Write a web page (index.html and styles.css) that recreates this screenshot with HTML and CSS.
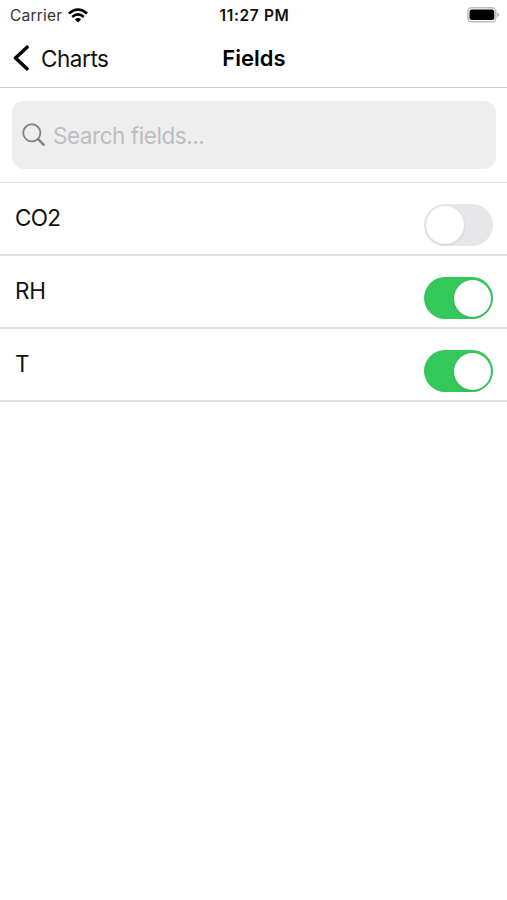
FILE: index.html
```html
<!DOCTYPE html>
<html lang="en">
<head>
<meta charset="utf-8">
<title>Fields</title>
<link rel="stylesheet" href="styles.css">
</head>
<body>
<div class="status">
  <div class="carrier"><span class="carrier-name">Carrier</span>
    <svg class="wifi" width="20" height="15" viewBox="0 0 20 15"><g fill="none" stroke="#000" stroke-width="2.6"><path d="M.9 5.4Q10-2.4 19.1 5.4"/><path d="M4.2 8.9Q10 4 15.8 8.9"/></g><path d="M6.9 11.4Q10 8.8 13.1 11.4L10 14.6Z"/></svg>
  </div>
  <span class="time">11:27 PM</span>
  <svg class="battery" width="32" height="16" viewBox="0 0 32 16"><rect x=".8" y=".8" width="28" height="14" rx="4" fill="#fff" stroke="#bdbdbd" stroke-width="1.5"/><rect x="2.5" y="2.5" width="24.8" height="10.6" rx="2.5"/><path d="M30.3 5.5Q32 6 32 7.8T30.3 10Z" fill="#aaa"/></svg>
</div>
<header class="nav">
  <a class="back"><svg width="16" height="26" viewBox="0 0 16 26"><path d="M14 2.2L2.5 13L14 23.8" fill="none" stroke="#000" stroke-width="3.5" stroke-linecap="round" stroke-linejoin="round"/></svg><span class="back-label">Charts</span></a>
  <h1 class="title">Fields</h1>
</header>
<div class="search-wrap">
  <div class="search">
    <svg width="24" height="24" viewBox="0 0 24 24"><g fill="none" stroke="#858585" stroke-width="1.9"><circle cx="9.8" cy="9.8" r="8.6"/><path d="M16 16L22.3 22.3" stroke-width="2.5"/></g></svg>
    <span class="placeholder">Search fields...</span>
  </div>
</div>
<main class="list">
  <div class="row"><span class="label co2">CO2</span><span class="switch"><i class="knob"></i></span></div>
  <div class="row"><span class="label rh">RH</span><span class="switch on"><i class="knob"></i></span></div>
  <div class="row"><span class="label">T</span><span class="switch on"><i class="knob"></i></span></div>
</main>
</body>
</html>
```
FILE: styles.css
```css
* { box-sizing: border-box; }
body { margin: 0; background: #fff; color: #111; font-family: Inter, "Liberation Sans", sans-serif; font-size: 22.5px; }
svg { display: block; flex: none; }
.status { display: grid; grid-template-columns: 1fr auto 1fr; align-items: center; height: 29px; padding: 0 8px 0 10px; }
.carrier { display: flex; align-items: center; gap: 6px; font-size: 15.5px; line-height: 29px; }
.carrier-name { letter-spacing: .2px; color: #333; padding-top: 1px; }
.time { font-size: 15.5px; font-weight: 600; letter-spacing: .65px; }
.battery { justify-self: end; }
.nav { display: grid; grid-template-columns: 1fr auto 1fr; align-items: center; height: 59px; padding: 0 12px 0 13px; border-bottom: 1px solid #c8c8c8; }
.back { display: flex; align-items: center; gap: 12px; height: 57px; }
.back-label { letter-spacing: -.45px; }
.title { margin: 0; font-size: 22px; font-weight: 600; color: #000; }
.search-wrap { height: 95px; padding: 13px 11px 13px 12px; border-bottom: 1px solid #e2e2e2; }
.search { display: flex; align-items: center; gap: 7px; height: 68px; padding-left: 10px; border-radius: 12px; background: #eee; }
.placeholder { color: #bdbdbf; letter-spacing: -.45px; }
.row { display: flex; justify-content: space-between; height: 73px; padding: 21.4px 14px 0 15px; border-bottom: 2px solid #e0e0e0; }
.label { line-height: 28px; }
.co2 { letter-spacing: -.7px; }
.rh { letter-spacing: -.3px; }
.switch { display: block; width: 69px; height: 42px; padding: 2px; border-radius: 21px; background: #e7e7e9; }
.knob { display: block; width: 38px; height: 38px; border-radius: 50%; background: #fff; box-shadow: 0 1px 3px rgba(0,0,0,.1); }
.on { background: #34c759; }
.on .knob { margin-left: 27.5px; width: 37px; height: 37px; margin-top: .5px; }
```
